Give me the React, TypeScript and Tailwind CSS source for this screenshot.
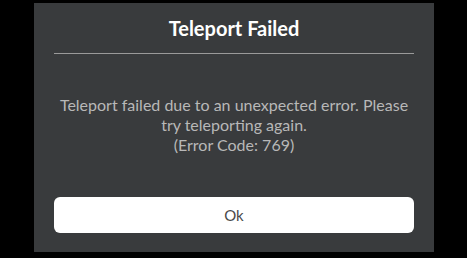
export default function App() {
    return (
        <div className="h-[258px] w-[467px] bg-black pl-[34px] pt-[3px] font-['Lato',sans-serif]">
            <div className="flex h-[249px] w-[400px] flex-col bg-[#393b3d] px-[20px]">
                <h1 className="pt-[13px] text-center text-[20px] leading-[24px] font-bold text-white">Teleport Failed</h1>
                <div className="mt-[13px] h-px bg-[#9a9a9a]"></div>
                <p className="mx-auto mt-[41px] max-w-[350px] text-center text-[16px] leading-[20px] text-[#b8b8b8]">
                    Teleport failed due to an unexpected error. Please try teleporting again.
                    <br />
                    (Error Code: 769)
                </p>
                <button className="mt-auto mb-[19px] h-[36px] w-full rounded-[6px] bg-white text-[15px] text-[#4a4a4a]">Ok</button>
            </div>
        </div>
    )
}
